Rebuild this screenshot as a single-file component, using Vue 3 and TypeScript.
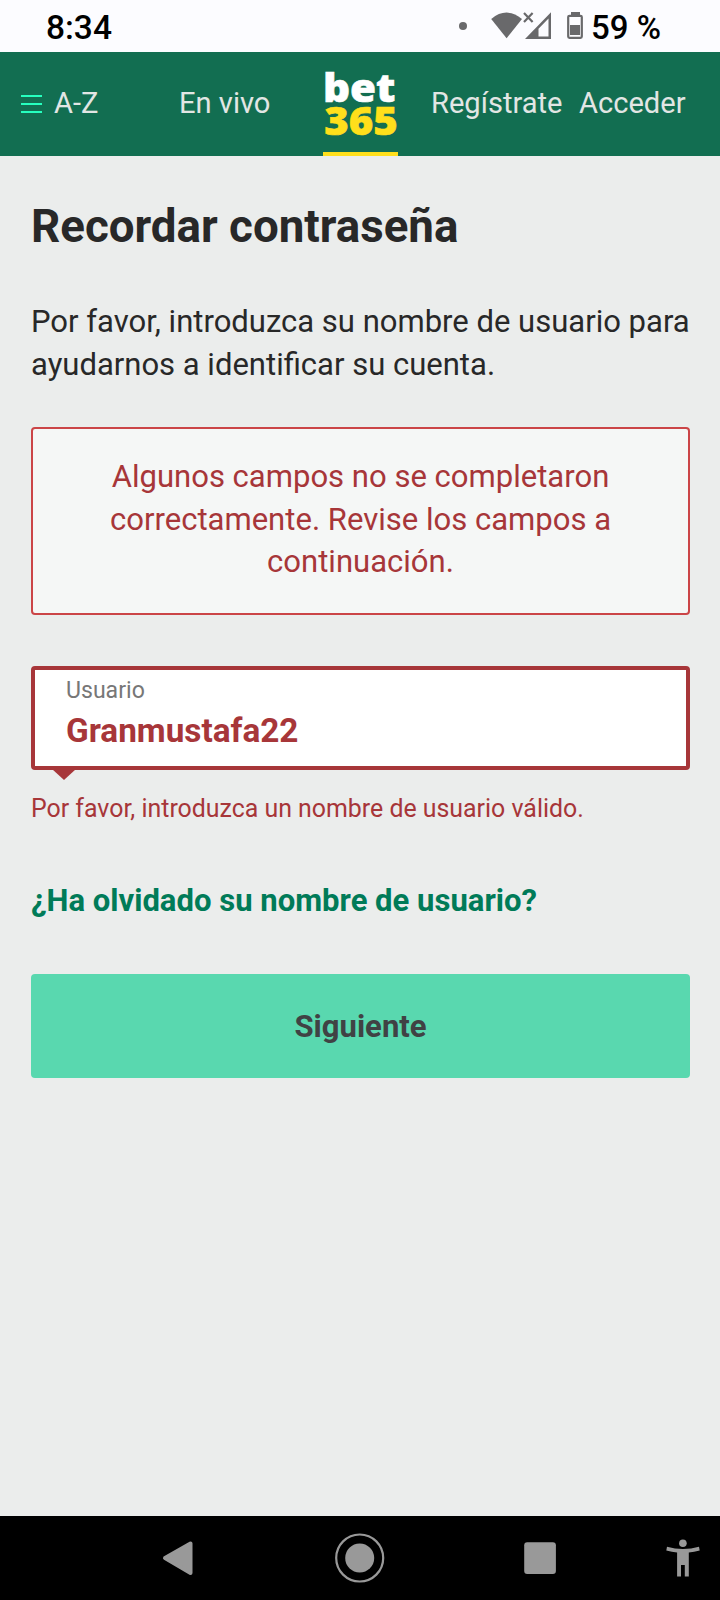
<script setup lang="ts">
import { ref } from 'vue'

const username = ref('Granmustafa22')
</script>

<template>
  <div class="screen">
    <header class="status">
      <span class="clock">8:34</span>
      <svg class="status-icons" width="130" height="52" viewBox="0 0 130 52" aria-hidden="true">
        <circle cx="8" cy="26" r="4" fill="#69696b" />
        <path d="M36.2 19Q51.5 6.2 67 19L51.6 38.2Z" fill="#69696b" />
        <path d="M69 13l8.6 9M77.6 13L69 22" stroke="#69696b" stroke-width="2.2" />
        <path fill-rule="evenodd" d="M70 39L96 12.2V39ZM83.5 36.5H93.5V18.5L83.5 28.8Z" fill="#69696b" />
        <path d="M116 12h9v3h-9z" fill="#69696b" />
        <rect x="113.2" y="15.8" width="13.6" height="22" rx="1.3" fill="none" stroke="#69696b" stroke-width="2.2" />
        <path d="M115 25h10v10h-10z" fill="#69696b" />
      </svg>
      <span class="battery">59 %</span>
    </header>

    <nav class="topbar">
      <a class="az">
        <svg width="21" height="20" viewBox="0 0 21 20" aria-hidden="true">
          <path d="M0 2h21M0 10h21M0 18h21" stroke="#26ffbe" stroke-width="2" />
        </svg>
        <span>A-Z</span>
      </a>
      <a class="live">En vivo</a>
      <div class="logo">
        <svg width="75" height="100" viewBox="0 0 75 100" aria-label="bet365">
          <text class="mark white" x="0" y="50" font-size="39.2" textLength="72.5" lengthAdjust="spacingAndGlyphs">bet</text>
          <text class="mark yellow" x="1.2" y="83" font-size="38" textLength="73.6" lengthAdjust="spacingAndGlyphs">365</text>
        </svg>
      </div>
      <a class="join">Regístrate</a>
      <a class="login">Acceder</a>
    </nav>

    <main class="content">
      <h1>Recordar contraseña</h1>
      <p class="intro">Por favor, introduzca su nombre de usuario para ayudarnos a identificar su cuenta.</p>
      <div class="alert">Algunos campos no se completaron correctamente. Revise los campos a continuación.</div>
      <label class="field">
        <span class="caption">Usuario</span>
        <span class="value">{{ username }}</span>
      </label>
      <p class="error">Por favor, introduzca un nombre de usuario válido.</p>
      <a class="forgot">¿Ha olvidado su nombre de usuario?</a>
      <button class="next" type="button">Siguiente</button>
    </main>

    <footer class="android">
      <svg width="720" height="84" viewBox="0 0 720 84" aria-hidden="true">
        <path d="M165 42L190.5 27.5V57Z" fill="#999" stroke="#999" stroke-width="4" stroke-linejoin="round" />
        <circle cx="359.7" cy="42" r="23.5" fill="none" stroke="#999" stroke-width="2.2" />
        <circle cx="359.7" cy="42" r="14.5" fill="#999" />
        <rect x="524.2" y="26.2" width="31.7" height="31.7" rx="3" fill="#999" />
        <circle cx="682.9" cy="27.3" r="3.8" fill="#999" />
        <path d="M667 30.8Q683 35.2 699 30.8L699.7 34.5Q694 36 688.8 36.5V60.5H684.8V49H681V60.5H677.1V36.5Q672 36 666.3 34.5Z" fill="#999" />
      </svg>
    </footer>
  </div>
</template>

<style>
body {
  margin: 0;
}
</style>

<style scoped>
.screen {
  width: 720px;
  height: 1600px;
  display: flex;
  flex-direction: column;
  background: #ebedec;
  font-family: Roboto, "Liberation Sans", sans-serif;
  color: #282828;
}

.status {
  height: 52px;
  display: flex;
  background: #fcfcff;
  color: #000;
  line-height: 56px;
  font-size: 33.5px;
  font-weight: 500;
}

.clock {
  width: 409px;
  padding-left: 46px;
}

.status-icons {
  flex: none;
}

.battery {
  margin-left: 6px;
  white-space: nowrap;
  font-size: 33px;
}

.topbar {
  height: 104px;
  display: grid;
  grid-template-columns: 179px 144px 75px 33px 148px 141px;
  background: #126e51;
  color: #e2e6e4;
  font-size: 29.1px;
  line-height: 102px;
}

.topbar a {
  white-space: nowrap;
}

.az {
  display: flex;
  align-items: center;
  padding-left: 21px;
  gap: 12px;
}

.az span {
  padding-bottom: 2px;
}

.logo {
  height: 100px;
  border-bottom: 4px solid #ffdf1b;
}

.logo svg {
  display: block;
}

.mark {
  font-family: "Noto Sans", "Open Sans", sans-serif;
  font-weight: 900;
  stroke-width: 0.6px;
}

.white {
  fill: #fff;
  stroke: #fff;
}

.yellow {
  fill: #ffdf1b;
  stroke: #ffdf1b;
}

.join {
  grid-column: 5;
}

.content {
  flex: 1;
  padding: 0 30px 0 31px;
}

h1 {
  margin: 44px 0 0;
  font-size: 45.7px;
  line-height: 54px;
  font-weight: 700;
}

.intro {
  margin: 47px -4px 0 0;
  font-size: 31.03px;
  line-height: 42.6px;
}

.alert {
  box-sizing: border-box;
  height: 188px;
  margin-top: 41px;
  padding: 27px 60px 0;
  border: 2px solid #cb4547;
  border-radius: 4px;
  background: #f5f7f6;
  color: #a73639;
  font-size: 31.05px;
  line-height: 42.6px;
  text-align: center;
}

.field {
  box-sizing: border-box;
  position: relative;
  display: flex;
  flex-direction: column;
  height: 104px;
  margin-top: 51px;
  padding: 7px 31px 0;
  border: 4px solid #a73639;
  border-radius: 4px;
  background: #fff;
}

.field::after {
  content: "";
  position: absolute;
  left: 16.5px;
  top: 99px;
  border: solid transparent;
  border-width: 11px 12px 0;
  border-top-color: #a73639;
}

.caption {
  color: #777;
  font-size: 23.1px;
  line-height: 28px;
}

.value {
  margin-top: 6px;
  color: #a73639;
  font-size: 33.3px;
  line-height: 40px;
  font-weight: 700;
}

.error {
  margin: 24px 0 0;
  color: #a73639;
  font-size: 24.9px;
  line-height: 30px;
}

.forgot {
  display: block;
  margin-top: 57px;
  color: #007b58;
  font-size: 31.05px;
  line-height: 40px;
  font-weight: 700;
}

.next {
  display: block;
  width: 100%;
  height: 104px;
  margin-top: 53px;
  padding: 2px 0 0;
  border: 0;
  border-radius: 4px;
  background: #59d8af;
  color: #404244;
  font: 700 31.05px/102px Roboto, "Liberation Sans", sans-serif;
}

.android {
  height: 84px;
  background: #000;
}

.android svg {
  display: block;
}
</style>
